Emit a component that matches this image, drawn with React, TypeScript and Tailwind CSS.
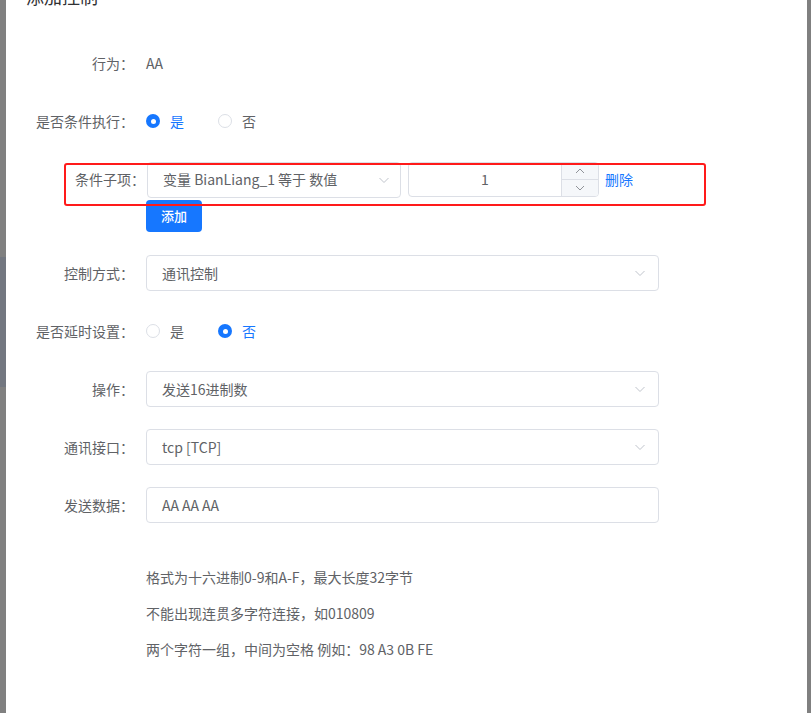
import React from "react";

const font = { fontFamily: '"Noto Sans CJK SC", "Noto Sans", sans-serif' };

function Chevron() {
  return (
    <svg width="12" height="12" viewBox="0 0 12 12" className="shrink-0">
      <path d="M1.5 4 L6 8.5 L10.5 4" fill="none" stroke="#c0c4cc" strokeWidth="1" />
    </svg>
  );
}

function Select({ value, className = "" }: { value: string; className?: string }) {
  return (
    <div
      className={`flex h-[36px] items-center justify-between rounded-[4px] border border-[#dcdfe6] bg-white pl-[15px] pr-[12px] text-[14px] text-[#606266] ${className}`}
    >
      <span>{value}</span>
      <Chevron />
    </div>
  );
}

function Radio({ checked, label }: { checked: boolean; label: string }) {
  return (
    <div className="mr-[34px] flex items-center">
      {checked ? (
        <span className="flex h-[14px] w-[14px] items-center justify-center rounded-full bg-[#1677ff]">
          <span className="h-[5px] w-[5px] rounded-full bg-white" />
        </span>
      ) : (
        <span className="h-[14px] w-[14px] rounded-full border border-[#dcdfe6] bg-white" />
      )}
      <span className={`ml-[10px] text-[14px] ${checked ? "text-[#1677ff]" : "text-[#606266]"}`}>{label}</span>
    </div>
  );
}

function Row({ label, children }: { label: string; children: React.ReactNode }) {
  return (
    <div className="flex h-[36px] items-center">
      <div className="w-[140px] shrink-0 pr-[12px] text-right text-[14px] text-[#606266]">{label}</div>
      {children}
    </div>
  );
}

export default function App() {
  return (
    <div className="flex h-[713px] w-[811px] overflow-hidden bg-[#808080]" style={font}>
      <div className="flex w-[6px] shrink-0 flex-col">
        <div className="h-[257px]" />
        <div className="h-[130px] bg-[#737780]" />
      </div>
      <div className="relative w-[801px] shrink-0 bg-white">
        <div className="ml-[20px] mt-[-16px] h-[24px] text-[18px] leading-[24px] text-[#303133]">添加控制</div>
        <div className="mt-[37px] flex flex-col">
          <Row label="行为：">
            <span className="text-[14px] text-[#606266]">AA</span>
          </Row>
          <div className="mt-[22px]">
            <Row label="是否条件执行：">
              <Radio checked label="是" />
              <Radio checked={false} label="否" />
            </Row>
          </div>
          <div className="mt-[23px] flex h-[35px] items-center pl-[69px]">
            <span className="w-[72px] shrink-0 text-[14px] text-[#606266]">条件子项：</span>
            <Select value="变量 BianLiang_1 等于 数值" className="h-[35px] w-[254px] !pr-[10px]" />
            <div className="ml-[7px] flex h-[35px] w-[191px] overflow-hidden rounded-[4px] border border-[#dcdfe6]">
              <div className="flex flex-1 items-center justify-center text-[14px] text-[#606266]">1</div>
              <div className="flex w-[37px] flex-col border-l border-[#dcdfe6] bg-[#f5f7fa]">
                <div className="flex flex-1 items-center justify-center border-b border-[#dcdfe6]">
                  <svg width="10" height="6" viewBox="0 0 10 6">
                    <path d="M1 5 L5 1 L9 5" fill="none" stroke="#909399" strokeWidth="1" />
                  </svg>
                </div>
                <div className="flex flex-1 items-center justify-center">
                  <svg width="10" height="6" viewBox="0 0 10 6">
                    <path d="M1 1 L5 5 L9 1" fill="none" stroke="#909399" strokeWidth="1" />
                  </svg>
                </div>
              </div>
            </div>
            <span className="ml-[6px] text-[14px] text-[#1677ff]">删除</span>
          </div>
          <div className="mt-[3px] pl-[140px]">
            <button className="flex h-[32px] w-[56px] items-center justify-center rounded-[4px] bg-[#1677ff] text-[13px] font-medium text-white">
              添加
            </button>
          </div>
          <div className="mt-[23px]">
            <Row label="控制方式：">
              <Select value="通讯控制" className="w-[513px]" />
            </Row>
          </div>
          <div className="mt-[22px]">
            <Row label="是否延时设置：">
              <Radio checked={false} label="是" />
              <Radio checked label="否" />
            </Row>
          </div>
          <div className="mt-[22px]">
            <Row label="操作：">
              <Select value="发送16进制数" className="w-[513px]" />
            </Row>
          </div>
          <div className="mt-[22px]">
            <Row label="通讯接口：">
              <Select value="tcp [TCP]" className="w-[513px]" />
            </Row>
          </div>
          <div className="mt-[22px]">
            <Row label="发送数据：">
              <div className="flex h-[36px] w-[513px] items-center rounded-[4px] border border-[#dcdfe6] pl-[15px] text-[14px] text-[#606266]">
                AA AA AA
              </div>
            </Row>
          </div>
          <div className="mt-[44px] flex flex-col gap-[15px] pl-[140px] text-[14px] leading-[21px] text-[#606266]">
            <span>格式为十六进制0-9和A-F，最大长度32字节</span>
            <span>不能出现连贯多字符连接，如010809</span>
            <span>两个字符一组，中间为空格 例如：98 A3 0B FE</span>
          </div>
        </div>
        <div className="pointer-events-none absolute left-[58px] top-[163px] h-[43px] w-[642px] rounded-[3px] border-2 border-[#ff1a1a]" />
      </div>
      <div className="w-[4px] shrink-0" />
    </div>
  );
}
